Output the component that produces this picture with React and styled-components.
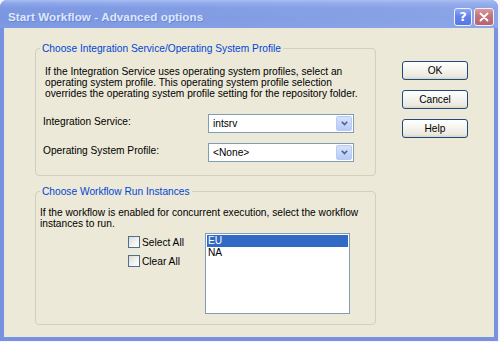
import React from 'react';
import styled, { createGlobalStyle } from 'styled-components';

const Global = createGlobalStyle`
  html, body { margin: 0; padding: 0; background: #f6f6fc; }
  body { width: 500px; height: 342px; overflow: hidden; font-family: "Liberation Sans", Arial, sans-serif; }
  * { box-sizing: border-box; }
`;

const Window = styled.div`
  width: 498px;
  height: 341px;
  display: flex;
  flex-direction: column;
  background: #7892df;
  border-radius: 7px 7px 0 0;
  overflow: hidden;
`;

const TitleBar = styled.div`
  height: 28px;
  flex: none;
  display: flex;
  align-items: center;
  padding: 5px 4px 0 8px;
  background:
    linear-gradient(90deg, rgba(120,146,223,0.0) 0%, rgba(170,190,240,0.35) 100%),
    linear-gradient(180deg, #a9bdf2 0px, #8ea8ea 3px, #7d98e2 8px, #7a96e1 20px, #7e9ae3 28px);
`;

const Title = styled.div`
  flex: 1;
  color: #dde7fb;
  font-weight: bold;
  font-size: 11.6px;
  letter-spacing: 0.1px;
  text-shadow: 1px 1px 0 rgba(70, 95, 170, 0.35);
`;

const CaptionButton = styled.div`
  width: ${p => p.$w}px;
  height: 18px;
  margin-left: 2px;
  border: 1px solid #eef2fd;
  border-radius: 3px;
  display: flex;
  align-items: center;
  justify-content: center;
  background: ${p => p.$red
    ? 'linear-gradient(180deg, #d89aa0 0%, #c4737c 45%, #b8646e 100%)'
    : 'linear-gradient(180deg, #8fa9f4 0%, #6585ec 45%, #5676e2 100%)'};
  color: #fff;
  font-weight: bold;
  font-size: 13px;
  font-family: "DejaVu Sans", sans-serif;
`;

const Body = styled.div`
  flex: 1;
  margin: 0 4px 4px 4px;
  background: #ece9d8;
  display: flex;
  padding: 15px 0 0 31px;
  font-size: 10.2px;
  color: #000;
`;

const LeftCol = styled.div`
  width: 341px;
  display: flex;
  flex-direction: column;
  gap: 10px;
`;

const Group = styled.fieldset`
  margin: 0;
  min-width: 0;
  border: 1px solid #d0d0bf;
  border-radius: 4px;
  padding: ${p => p.$pad};
`;

const Legend = styled.legend`
  color: #0046d5;
  font-size: 10.2px;
  line-height: 11px;
  padding: 0 2px;
  margin-left: ${p => p.$ml}px;
`;

const Para = styled.div`
  line-height: 11px;
  margin-left: ${p => p.$ml || 0}px;
  white-space: nowrap;
`;

const FormGrid = styled.div`
  display: grid;
  grid-template-columns: 165px 146px;
  row-gap: 10px;
  margin-top: 15px;
`;

const Label = styled.div`
  line-height: 11px;
  padding-top: 2px;
`;

const Select = styled.div`
  height: 19px;
  border: 1px solid #7f9db9;
  background: #fff;
  display: flex;
  align-items: center;
  justify-content: space-between;
  padding: 1px 0 1px 4px;
`;

const SelectValue = styled.span`
  line-height: 11px;
`;

const ArrowButton = styled.div`
  width: 16px;
  height: 15px;
  border: 1px solid #b9cbf5;
  border-radius: 2px;
  background: linear-gradient(180deg, #d6e2fc 0%, #c3d4fa 60%, #b7caf6 100%);
  display: flex;
  align-items: center;
  justify-content: center;
  margin-right: 1px;
`;

const InstanceRow = styled.div`
  display: flex;
  margin-top: 4px;
`;

const CheckCol = styled.div`
  width: 77px;
  margin-left: 88px;
  padding-top: 3px;
  display: flex;
  flex-direction: column;
  gap: 7px;
`;

const CheckRow = styled.label`
  display: flex;
  align-items: center;
  gap: 2px;
  height: 12px;
  line-height: 11px;
`;

const Box = styled.span`
  width: 12px;
  height: 12px;
  border: 1px solid #4f6f8f;
  background: linear-gradient(135deg, #dcdcd5 0%, #f4f4f0 60%, #ffffff 100%);
`;

const ListBox = styled.div`
  width: 145px;
  height: 81px;
  border: 1px solid #7f9db9;
  background: #fff;
  padding: 1px;
`;

const ListItem = styled.div`
  height: 12px;
  line-height: 12px;
  padding: 0 1px;
  color: ${p => p.$sel ? '#fff' : '#000'};
  background: ${p => p.$sel ? '#316ac5' : 'transparent'};
`;

const RightCol = styled.div`
  margin-left: 26px;
  margin-top: 18px;
  display: flex;
  flex-direction: column;
  gap: 10px;
`;

const Button = styled.div`
  width: 66px;
  height: 19px;
  border: 1px solid #1f4a7e;
  border-radius: 3px;
  background: linear-gradient(180deg, #ffffff 0%, #f6f5f0 40%, #ebe8de 85%, #d8d3c6 100%);
  display: flex;
  align-items: center;
  justify-content: center;
  line-height: 11px;
`;

const Chevron = () => (
  <svg width="7" height="5" viewBox="0 0 7 5">
    <path d="M0.8 0.8 L3.5 3.5 L6.2 0.8" fill="none" stroke="#4d6185" strokeWidth="1.6" />
  </svg>
);

const CloseGlyph = () => (
  <svg width="10" height="10" viewBox="0 0 10 10">
    <path d="M1.5 1.5 L8.5 8.5 M8.5 1.5 L1.5 8.5" stroke="#fff" strokeWidth="1.8" strokeLinecap="round" />
  </svg>
);

export default function App() {
  return (
    <>
      <Global />
      <Window>
        <TitleBar>
          <Title>Start Workflow - Advanced options</Title>
          <CaptionButton $w={18}>?</CaptionButton>
          <CaptionButton $w={20} $red><CloseGlyph /></CaptionButton>
        </TitleBar>
        <Body>
          <LeftCol>
            <Group $pad="12px 7px 13px 7px">
              <Legend $ml={-3}>Choose Integration Service/Operating System Profile</Legend>
              <Para $ml={2}>
                If the Integration Service uses operating system profiles, select an<br />
                operating system profile. This operating system profile selection<br />
                overrides the operating system profile setting for the repository folder.
              </Para>
              <FormGrid>
                <Label>Integration Service:</Label>
                <Select>
                  <SelectValue>intsrv</SelectValue>
                  <ArrowButton><Chevron /></ArrowButton>
                </Select>
                <Label>Operating System Profile:</Label>
                <Select>
                  <SelectValue>&lt;None&gt;</SelectValue>
                  <ArrowButton><Chevron /></ArrowButton>
                </Select>
              </FormGrid>
            </Group>
            <Group $pad="10px 4px 10px 4px">
              <Legend $ml={0}>Choose Workflow Run Instances</Legend>
              <Para>
                If the workflow is enabled for concurrent execution, select the workflow<br />
                instances to run.
              </Para>
              <InstanceRow>
                <CheckCol>
                  <CheckRow><Box />Select All</CheckRow>
                  <CheckRow><Box />Clear All</CheckRow>
                </CheckCol>
                <ListBox>
                  <ListItem $sel>EU</ListItem>
                  <ListItem>NA</ListItem>
                </ListBox>
              </InstanceRow>
            </Group>
          </LeftCol>
          <RightCol>
            <Button>OK</Button>
            <Button>Cancel</Button>
            <Button>Help</Button>
          </RightCol>
        </Body>
      </Window>
    </>
  );
}
